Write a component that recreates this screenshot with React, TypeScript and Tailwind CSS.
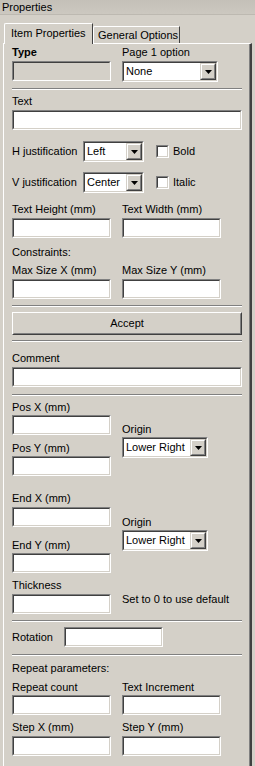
import React from "react";

const Sunken = ({ w, h = 20, gray = false, children }: { w: number; h?: number; gray?: boolean; children?: React.ReactNode }) => (
  <div
    className="border border-t-[#808080] border-l-[#808080] border-b-white border-r-white shrink-0"
    style={{ width: w, height: h }}
  >
    <div
      className={`w-full h-full border border-t-[#404040] border-l-[#404040] border-b-[#d4d0c8] border-r-[#d4d0c8] flex items-center ${gray ? "bg-[#d4d0c8]" : "bg-white"}`}
    >
      {children}
    </div>
  </div>
);

const Select = ({ w, value }: { w: number; value: string }) => (
  <Sunken w={w} h={21}>
    <span className="flex-1 pl-[2px] leading-[13px] whitespace-nowrap overflow-hidden">{value}</span>
    <div className="h-full w-[16px] shrink-0 border border-t-[#d4d0c8] border-l-[#d4d0c8] border-b-[#404040] border-r-[#404040]">
      <div className="w-full h-full border border-t-white border-l-white border-b-[#808080] border-r-[#808080] bg-[#d4d0c8] flex items-center justify-center">
        <svg width="7" height="4" viewBox="0 0 7 4">
          <polygon points="0,0 7,0 3.5,4" fill="#000" />
        </svg>
      </div>
    </div>
  </Sunken>
);

const Checkbox = () => (
  <div className="w-[13px] h-[13px] border border-t-[#808080] border-l-[#808080] border-b-white border-r-white shrink-0">
    <div className="w-full h-full border border-t-[#404040] border-l-[#404040] border-b-[#d4d0c8] border-r-[#d4d0c8] bg-white" />
  </div>
);

const Sep = ({ mt }: { mt: string }) => (
  <div className={`${mt} w-[230px]`}>
    <div className="h-px bg-[#808080]" />
    <div className="h-px bg-white" />
  </div>
);

const Label = ({ children, className = "" }: { children: React.ReactNode; className?: string }) => (
  <div className={`leading-[13px] h-[13px] whitespace-nowrap ${className}`}>{children}</div>
);

export default function App() {
  return (
    <div
      className="w-[255px] h-[766px] bg-[#d4d0c8] text-black text-[11px] overflow-hidden"
      style={{ fontFamily: '"Liberation Sans", Arial, sans-serif' }}
    >
      {/* Header */}
      <div className="h-[15px] bg-gradient-to-b from-[#c4c0b8] to-[#ccc8c0] border-b border-[#bdb9b1] flex items-center pl-[2px]">
        <span className="leading-[13px]">Properties</span>
      </div>
      {/* Tab strip */}
      <div className="h-[28px] flex items-end pl-[4px]">
        <div className="relative z-10 -mb-px h-[21px] w-[89px] bg-[#d4d0c8] border-t border-l border-white border-r border-r-[#404040] rounded-tl-[2px] flex items-start pt-[3px] pl-[6px]">
          <span className="leading-[13px] whitespace-nowrap">Item Properties</span>
        </div>
        <div className="h-[17px] w-[87px] border-t border-l border-white border-r border-r-[#404040] rounded-tl-[2px] flex items-start pt-[2px] pl-[4px]">
          <span className="leading-[13px] whitespace-nowrap">General Options</span>
        </div>
      </div>
      {/* Panel */}
      <div className="ml-[3px] w-[249px] h-[723px] border-t border-l border-white border-r-2 border-r-[#404040]">
        <div className="h-full border-r border-[#808080] pl-[8px] flex flex-col">
          {/* Type / Page 1 option */}
          <div className="mt-[2px] flex gap-[11px]">
            <div className="w-[99px]">
              <Label className="font-bold">Type</Label>
              <div className="mt-[2px]"><Sunken w={99} gray /></div>
            </div>
            <div>
              <Label>Page 1 option</Label>
              <div className="mt-[2px]"><Select w={96} value="None" /></div>
            </div>
          </div>
          <Sep mt="mt-[6px]" />
          <Label className="mt-[5px]">Text</Label>
          <div className="mt-[2px]"><Sunken w={230} /></div>
          {/* H justification */}
          <div className="mt-[11px] flex items-center h-[21px]">
            <Label className="w-[71px]">H justification</Label>
            <Select w={61} value="Left" />
            <div className="ml-[12px]"><Checkbox /></div>
            <Label className="ml-[4px]">Bold</Label>
          </div>
          <div className="mt-[10px] flex items-center h-[21px]">
            <Label className="w-[71px]">V justification</Label>
            <Select w={61} value="Center" />
            <div className="ml-[12px]"><Checkbox /></div>
            <Label className="ml-[4px]">Italic</Label>
          </div>
          {/* Text height / width */}
          <div className="mt-[10px] flex gap-[11px]">
            <div>
              <Label>Text Height (mm)</Label>
              <div className="mt-[2px]"><Sunken w={99} /></div>
            </div>
            <div>
              <Label>Text Width (mm)</Label>
              <div className="mt-[2px]"><Sunken w={99} /></div>
            </div>
          </div>
          <Label className="mt-[8px]">Constraints:</Label>
          <div className="mt-[5px] flex gap-[11px]">
            <div>
              <Label>Max Size X (mm)</Label>
              <div className="mt-[2px]"><Sunken w={99} /></div>
            </div>
            <div>
              <Label>Max Size Y (mm)</Label>
              <div className="mt-[2px]"><Sunken w={99} /></div>
            </div>
          </div>
          <Sep mt="mt-[6px]" />
          {/* Accept */}
          <div className="mt-[5px] w-[230px] h-[23px] border border-t-white border-l-white border-b-[#404040] border-r-[#404040]">
            <div className="w-full h-full border border-t-[#d4d0c8] border-l-[#d4d0c8] border-b-[#808080] border-r-[#808080] flex items-center justify-center">
              <span className="leading-[13px]">Accept</span>
            </div>
          </div>
          <Sep mt="mt-[5px]" />
          <Label className="mt-[10px]">Comment</Label>
          <div className="mt-[2px]"><Sunken w={230} /></div>
          <Sep mt="mt-[7px]" />
          {/* Pos */}
          <div className="mt-[5px] flex gap-[11px]">
            <div className="w-[99px]">
              <Label>Pos X (mm)</Label>
              <div className="mt-px"><Sunken w={99} /></div>
              <Label className="mt-[7px]">Pos Y (mm)</Label>
              <div className="mt-px"><Sunken w={99} /></div>
            </div>
            <div className="pt-[22px]">
              <Label>Origin</Label>
              <div className="mt-px"><Select w={86} value="Lower Right" /></div>
            </div>
          </div>
          {/* End */}
          <div className="mt-[16px] flex gap-[11px]">
            <div className="w-[99px]">
              <Label>End X (mm)</Label>
              <div className="mt-[2px]"><Sunken w={99} /></div>
              <Label className="mt-[12px]">End Y (mm)</Label>
              <div className="mt-px"><Sunken w={99} /></div>
            </div>
            <div className="pt-[24px]">
              <Label>Origin</Label>
              <div className="mt-px"><Select w={86} value="Lower Right" /></div>
            </div>
          </div>
          {/* Thickness */}
          <div className="mt-[6px] flex gap-[11px]">
            <div className="w-[99px]">
              <Label>Thickness</Label>
              <div className="mt-[2px]"><Sunken w={99} /></div>
            </div>
            <Label className="mt-[14px]">Set to 0 to use default</Label>
          </div>
          <Sep mt="mt-[6px]" />
          {/* Rotation */}
          <div className="mt-[5px] flex items-center">
            <Label className="w-[52px]">Rotation</Label>
            <Sunken w={99} />
          </div>
          <Sep mt="mt-[7px]" />
          <Label className="mt-[6px]">Repeat parameters:</Label>
          <div className="mt-[6px] flex gap-[11px]">
            <div>
              <Label>Repeat count</Label>
              <div className="mt-px"><Sunken w={99} /></div>
            </div>
            <div>
              <Label>Text Increment</Label>
              <div className="mt-px"><Sunken w={99} /></div>
            </div>
          </div>
          <div className="mt-[6px] flex gap-[11px]">
            <div>
              <Label>Step X (mm)</Label>
              <div className="mt-[2px]"><Sunken w={99} /></div>
            </div>
            <div>
              <Label>Step Y (mm)</Label>
              <div className="mt-[2px]"><Sunken w={99} /></div>
            </div>
          </div>
        </div>
      </div>
    </div>
  );
}
